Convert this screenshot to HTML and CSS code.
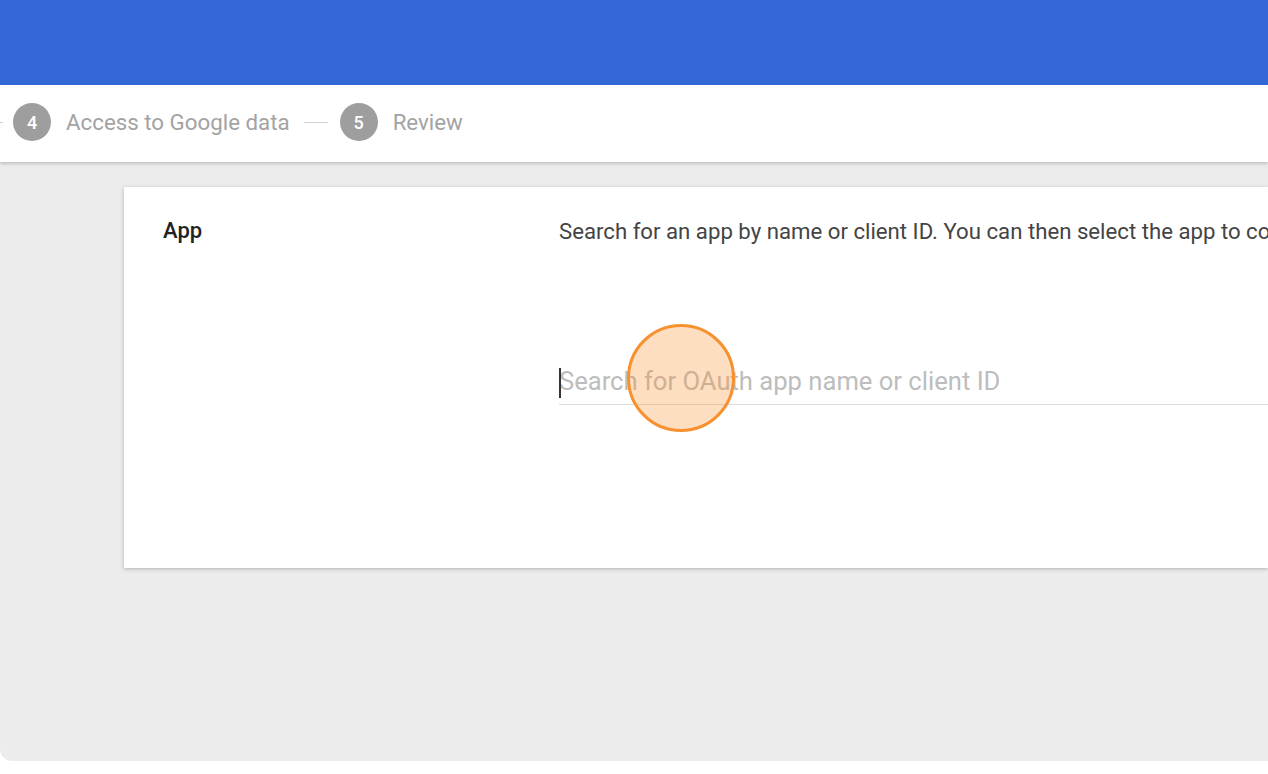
FILE: index.html
```html
<!DOCTYPE html>
<html lang="en">
  <head>
    <meta charset="UTF-8" />
    <title>App access control</title>
    <link rel="stylesheet" href="styles.css">
  </head>
  <body>
    <div class="frame">
      <div class="topbar"></div>

      <!-- Stepper -->
      <div class="stepper">
        <span class="step-line cut"></span>
        <div class="step">
          <span class="step-num">4</span>
          <span class="step-label">Access to Google data</span>
        </div>
        <span class="step-line"></span>
        <div class="step">
          <span class="step-num">5</span>
          <span class="step-label">Review</span>
        </div>
      </div>

      <div class="content">
        <div class="card">
          <div class="card-label">App</div>
          <div class="card-body">
            <p class="hint">Search for an app by name or client ID. You can then select the app to configure its access to Google data.</p>
            <div class="search-field">
              <span class="caret"></span>
              <input type="text" class="search-input" placeholder="Search for OAuth app name or client ID" />
              <span class="click-mark"></span>
            </div>
          </div>
        </div>
      </div>
    </div>
  </body>
</html>
```

FILE: styles.css
```css
body {
  margin: 0;
  padding: 0;
  background-color: white;
  font-family: Roboto, "Liberation Sans", sans-serif;
  overflow: hidden;
}

.frame {
  height: 761px;
  background-color: #ececec;
  border-bottom-left-radius: 12px;
  overflow: hidden;
  display: flex;
  flex-direction: column;
}

.topbar {
  height: 85px;
  background-color: #3367d6;
  flex-shrink: 0;
}

.stepper {
  height: 74px;
  padding-bottom: 3px;
  background-color: white;
  display: flex;
  align-items: center;
  box-shadow: 0px 2px 3px rgba(0, 0, 0, 0.18);
  position: relative;
  z-index: 1;
  flex-shrink: 0;
}

.step {
  display: flex;
  align-items: center;
  gap: 15px;
}

.step-num {
  width: 38px;
  height: 38px;
  border-radius: 50%;
  background-color: #9e9e9e;
  color: white;
  font-size: 18px;
  font-weight: 500;
  display: flex;
  align-items: center;
  justify-content: center;
}

.step-label {
  color: #a3a3a3;
  font-size: 22.3px;
}

.step-line {
  width: 24px;
  height: 1px;
  background-color: #cfcfcf;
  margin: 0 12px 0 14px;
}

.step-line.cut {
  width: 3px;
  margin: 0 10px 0 0;
}

.content {
  padding: 25px 0 0 124px;
}

.card {
  height: 381px;
  background-color: white;
  box-shadow: 0px 1px 4px rgba(0, 0, 0, 0.25);
  display: flex;
}

.card-label {
  width: 396px;
  padding: 31px 0 0 39px;
  flex-shrink: 0;
  color: #222;
  font-size: 22px;
  line-height: 26px;
  font-weight: 500;
}

.card-body {
  flex: 1;
  min-width: 0;
  overflow: hidden;
}

.hint {
  margin: 31px 0 0 0;
  white-space: nowrap;
  color: #444;
  font-size: 22.2px;
  line-height: 26px;
}

.search-field {
  position: relative;
  margin-top: 122px;
  border-bottom: 1px solid #dcdcdc;
}

.search-input {
  display: block;
  width: 100%;
  border: none;
  outline: none;
  padding: 0 0 8px 0;
  font-family: Roboto, "Liberation Sans", sans-serif;
  font-size: 25.6px;
  line-height: 30px;
  height: 38px;
  box-sizing: border-box;
  background: transparent;
}

.search-input::placeholder {
  color: #bdbdbd;
}

.caret {
  position: absolute;
  left: 0;
  top: 2px;
  width: 1.5px;
  height: 30px;
  background-color: #333;
}

.click-mark {
  position: absolute;
  left: 68px;
  top: -42px;
  width: 108px;
  height: 108px;
  border-radius: 50%;
  border: 3px solid #f7912f;
  background-color: rgba(248, 145, 47, 0.3);
  box-sizing: border-box;
}
```
